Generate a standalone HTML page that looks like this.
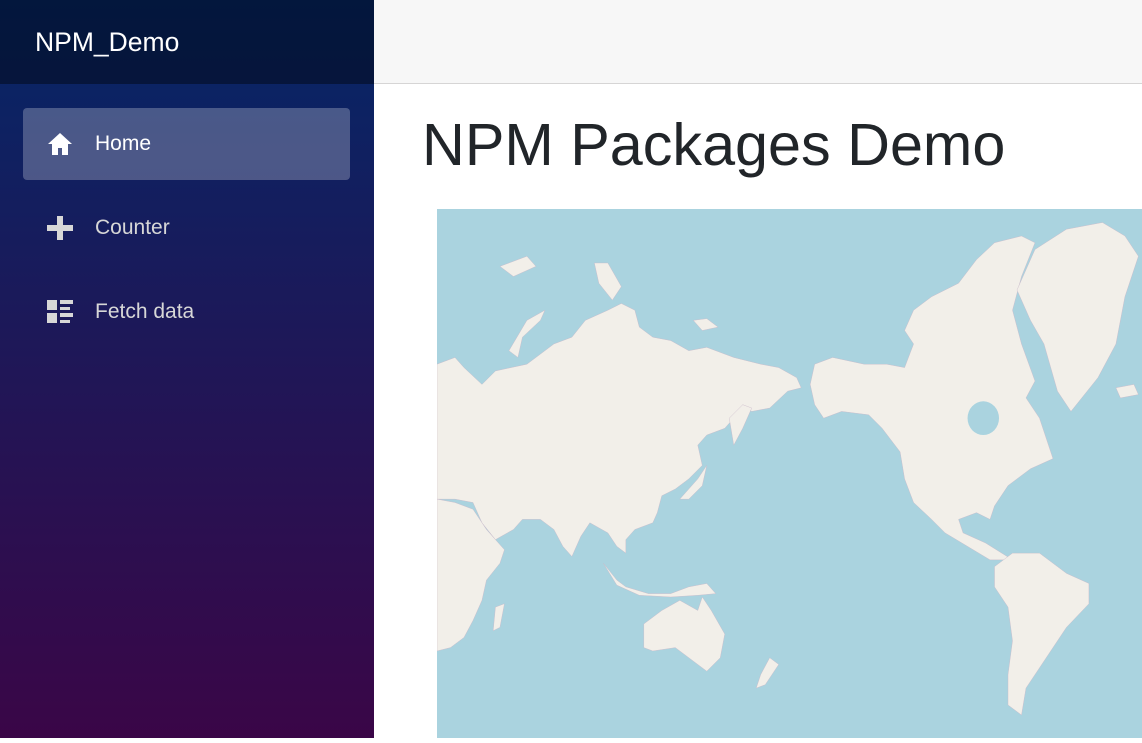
<!DOCTYPE html>
<html><head><style>
*{margin:0;padding:0;box-sizing:border-box}
body{width:1142px;height:738px;overflow:hidden;font-family:"Liberation Sans",Arial,sans-serif;position:relative;background:#fff}
.side{position:absolute;left:0;top:0;width:374px;height:738px;background:linear-gradient(180deg,#052767 0%,#3a0647 100%)}
.brand{height:84px;background:rgba(0,0,0,0.4);color:#fff;font-size:26.5px;padding:27px 0 0 35px}
.item{position:absolute;left:23px;width:327px;height:72px;border-radius:4px;color:#d7d7d7;font-size:21px}
.item.act{background:rgba(255,255,255,0.25);color:#fff}
.item span{position:absolute;left:72px;top:24px}
.item svg{position:absolute;left:24px;top:24px}
.top{position:absolute;left:374px;top:0;right:0;height:84px;background:#f7f7f7;border-bottom:1px solid #d6d5d5}
h1{position:absolute;left:422px;top:110px;font-weight:400;font-size:59.3px;color:#212529;white-space:nowrap}
.map{position:absolute;left:437px;top:209px;width:705px;height:529px;background:#aad3df}
</style></head><body>
<div class="side">
<div class="brand">NPM_Demo</div>
<div class="item act" style="top:108px"><svg width="26" height="24" viewBox="0 0 26 24"><path d="M13 1 L1 12 H5 V23 H11 V16 H15 V23 H21 V12 H25 Z" fill="#fff"/></svg><span>Home</span></div>
<div class="item" style="top:192px"><svg width="26" height="24" viewBox="0 0 26 24"><path d="M10 0H16V9H26V15H16V24H10V15H0V9H10Z" fill="#d7d7d7"/></svg><span>Counter</span></div>
<div class="item" style="top:276px"><svg width="26" height="24" viewBox="0 0 26 24"><g fill="#d7d7d7"><rect x="0" y="0" width="10" height="10"/><rect x="0" y="13" width="10" height="10"/><rect x="13" y="0" width="13" height="4"/><rect x="13" y="7" width="10" height="3"/><rect x="13" y="13" width="13" height="4"/><rect x="13" y="20" width="10" height="3"/></g></svg><span>Fetch data</span></div>
</div>
<div class="top"></div>
<h1>NPM Packages Demo</h1>
<div class="map"><svg width="705" height="529" viewBox="0 0 1568 1568" preserveAspectRatio="none"><g fill="#f2efe9" stroke="#c9b8c8" stroke-width="1" vector-effect="non-scaling-stroke">
<path d="M0,460 40,440 60,470 100,520 130,480 200,460 240,420 260,400 300,380 330,330 380,300 410,280 440,300 450,350 480,380 520,390 560,420 600,410 660,440 720,460 760,470 800,500 810,530 780,540 740,590 700,600 680,580 660,620 640,650 600,670 580,700 590,760 560,800 530,830 500,850 490,900 480,930 440,950 420,980 420,1020 400,1000 380,960 340,930 320,970 300,1030 280,1000 260,950 230,920 190,920 170,950 130,980 100,930 80,870 40,860 0,860Z"/>
<path d="M0,860 40,870 80,890 110,950 150,1010 140,1050 110,1100 100,1160 80,1220 60,1270 30,1300 0,1310Z"/>
<path d="M540,860 580,800 600,760 590,820 560,860Z"/>
<path d="M650,620 680,580 700,590 680,650 660,700Z"/>
<path d="M460,1230 500,1190 540,1160 580,1190 590,1150 610,1190 640,1260 630,1330 600,1370 570,1340 530,1300 480,1310 460,1300Z"/>
<path d="M740,1330 760,1350 730,1410 710,1420 720,1380Z"/>
<path d="M130,1180 150,1170 140,1240 125,1250Z"/>
<path d="M370,1050 400,1100 420,1120 470,1140 520,1140 560,1120 600,1110 620,1140 580,1145 520,1150 450,1145 400,1115Z"/>
<path d="M840,460 880,440 950,460 1000,460 1040,470 1060,400 1040,360 1060,300 1100,260 1160,220 1200,150 1240,100 1300,80 1330,100 1300,200 1280,300 1300,400 1330,510 1310,560 1340,620 1370,740 1320,770 1270,820 1240,880 1230,920 1200,900 1160,920 1170,960 1220,990 1280,1040 1230,1040 1180,1000 1130,960 1100,920 1060,870 1040,800 1030,720 990,650 960,610 900,600 860,620 840,580 830,520Z"/>
<path d="M1240,1060 1280,1020 1340,1020 1400,1080 1450,1110 1450,1170 1400,1240 1370,1300 1340,1360 1310,1420 1300,1500 1270,1470 1270,1380 1280,1280 1270,1180 1240,1120Z"/>
<path d="M1290,240 1330,120 1400,60 1480,40 1530,80 1560,140 1530,260 1510,400 1470,500 1410,600 1380,540 1350,400 1320,330Z"/>
<path d="M160,420 200,330 240,300 230,330 190,380 180,440Z"/>
<path d="M350,160 380,160 410,230 390,270 360,220Z"/>
<path d="M1510,530 1550,520 1560,550 1520,560Z"/>
<path d="M570,330 600,325 625,350 590,360Z"/>
<path d="M140,170 200,140 220,170 170,200Z"/>
</g><ellipse cx="1215" cy="620" rx="35" ry="50" fill="#aad3df"/></svg></div>
</body></html>
